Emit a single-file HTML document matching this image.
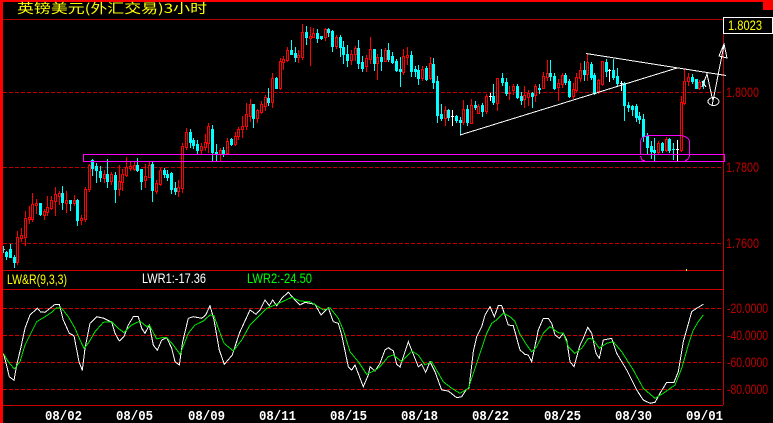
<!DOCTYPE html>
<html><head><meta charset="utf-8"><style>
html,body{margin:0;padding:0;background:#000;width:773px;height:423px;overflow:hidden}
svg{display:block}
text{white-space:pre}
</style></head><body>
<svg id="s" xmlns="http://www.w3.org/2000/svg" width="773" height="423" viewBox="0 0 773 423">
<rect width="773" height="423" fill="#000"/>
<g id="grid" shape-rendering="crispEdges">
<path d="M3 19.5H723" stroke="#b00000"/>
<path d="M3 92.5H723M3 167.5H723M3 243.5H723" stroke="#c00000" stroke-dasharray="4 2"/>
<path d="M3 308.5H723M3 335.5H723M3 362.5H723M3 389.5H723" stroke="#d00000" stroke-dasharray="4 2"/>
<path d="M3 270.5H723M3 289.5H723M3 405.5H723M723.5 19V405" stroke="#c80000"/>
</g>
<g id="candles" shape-rendering="crispEdges"></g>
<g shape-rendering="crispEdges" fill="none" stroke="#ff00ff">
<rect x="83.5" y="154.5" width="641" height="7"/>
<path d="M640.5 154V141L642 138L645 136.5L648 135.5H681L685 136.5L688 138.5L689.5 141V156L688 159L685 161"/>
<path d="M640.5 156L642 160L645 161"/>
</g>
<g shape-rendering="crispEdges" fill="none" stroke="#fff">
<path d="M460 135L677 68"/>
<path d="M586 53.5L726 75.5"/>
<path d="M702 87L707 74L712 97L713 100"/>
<path d="M702 81L706 87"/>
<ellipse cx="713.5" cy="101.5" rx="5.5" ry="4"/>
<path d="M712 106L724 45"/>
<path d="M724 44L719 56L727 58L724 44Z"/>
</g>
<g id="osc" shape-rendering="crispEdges" fill="none"></g>
<rect x="686" y="269" width="1" height="2" fill="#ff0"/>
<rect x="0" y="0" width="773" height="2" fill="#f00"/>
<rect x="0" y="0" width="3" height="423" fill="#f00"/>
<rect x="763" y="0" width="10" height="10" fill="#f00"/>
<rect x="723.5" y="17.5" width="49" height="16" fill="#000" stroke="#fff"/>
<text x="17" y="13" font-size="13" fill="#ff0" textLength="190" lengthAdjust="spacingAndGlyphs" font-family="'WenQuanYi Zen Hei','Noto Sans CJK SC',sans-serif">英镑美元(外汇交易)3小时</text>
<g font-family="'Liberation Sans',sans-serif" font-size="13.5">
<text x="728" y="30" fill="#ff0" textLength="34" lengthAdjust="spacingAndGlyphs">1.8023</text>
<g fill="#c00000">
<text x="726" y="97" textLength="33" lengthAdjust="spacingAndGlyphs">1.8000</text>
<text x="726" y="172" textLength="33" lengthAdjust="spacingAndGlyphs">1.7800</text>
<text x="726" y="248" textLength="33" lengthAdjust="spacingAndGlyphs">1.7600</text>
<text x="727" y="313" textLength="41" lengthAdjust="spacingAndGlyphs">-20.0000</text>
<text x="727" y="340" textLength="41" lengthAdjust="spacingAndGlyphs">-40.0000</text>
<text x="727" y="367" textLength="41" lengthAdjust="spacingAndGlyphs">-60.0000</text>
<text x="727" y="394" textLength="41" lengthAdjust="spacingAndGlyphs">-80.0000</text>
</g>
<text x="7" y="284" fill="#ff0" textLength="60" lengthAdjust="spacingAndGlyphs">LW&amp;R(9,3,3)</text>
<text x="142" y="283" fill="#fff" textLength="64" lengthAdjust="spacingAndGlyphs">LWR1:-17.36</text>
<text x="247" y="283" fill="#0f0" textLength="65" lengthAdjust="spacingAndGlyphs">LWR2:-24.50</text>
</g>
<g font-family="'Liberation Mono',monospace" font-size="14" font-weight="bold" fill="#fff">
<text x="45" y="420" textLength="37" lengthAdjust="spacingAndGlyphs">08/02</text>
<text x="116" y="420" textLength="37" lengthAdjust="spacingAndGlyphs">08/05</text>
<text x="188" y="420" textLength="37" lengthAdjust="spacingAndGlyphs">08/09</text>
<text x="259" y="420" textLength="37" lengthAdjust="spacingAndGlyphs">08/11</text>
<text x="330" y="420" textLength="37" lengthAdjust="spacingAndGlyphs">08/15</text>
<text x="401" y="420" textLength="37" lengthAdjust="spacingAndGlyphs">08/18</text>
<text x="472" y="420" textLength="37" lengthAdjust="spacingAndGlyphs">08/22</text>
<text x="544" y="420" textLength="37" lengthAdjust="spacingAndGlyphs">08/25</text>
<text x="615" y="420" textLength="37" lengthAdjust="spacingAndGlyphs">08/30</text>
<text x="686" y="420" textLength="37" lengthAdjust="spacingAndGlyphs">09/01</text>
</g>
</svg>
<script>
var px="c 3 246 249 249 252,c 6 251 252 256 259,c 10 244 249 257 257,c 14 255 257 262 267,r 17 231 237 262 264,r 21 228 235 238 241,r 25 211 218 237 245,r 29 206 217 219 223,r 32 193 204 219 221,r 36 199 203 205 213,c 40 203 203 214 215,r 44 209 211 215 219,r 47 196 207 212 215,r 51 196 200 208 209,r 55 187 194 201 215,r 59 191 193 196 204,c 62 186 193 202 209,r 66 191 200 203 212,c 70 200 200 203 210,r 74 195 200 203 205,c 77 199 200 220 225,r 81 215 218 220 224,r 85 187 189 219 221,r 89 164 165 189 191,c 92 159 160 168 175,c 96 163 166 170 182,c 100 166 171 177 181,r 104 170 174 178 182,c 107 159 174 181 187,r 111 172 174 181 184,c 115 172 175 189 202,r 119 165 181 189 195,r 122 169 174 182 190,r 126 157 167 175 176,r 130 162 166 168 170,r 134 162 165 169 170,c 137 158 165 170 171,c 141 169 169 181 189,r 145 164 176 180 187,r 149 162 165 177 177,c 152 162 164 190 201,r 156 180 183 191 193,r 160 168 170 184 185,c 164 168 170 174 177,c 167 170 174 177 180,c 171 172 173 189 193,c 175 182 188 191 194,r 178 180 187 191 196,r 182 143 146 188 192,r 186 128 132 147 149,c 190 129 132 142 147,c 193 138 140 145 148,c 197 140 144 150 154,r 201 143 146 150 154,r 205 134 142 147 150,r 208 123 126 143 152,c 212 125 129 152 161,c 216 144 152 154 160,r 220 148 150 154 161,c 223 147 150 153 156,r 227 138 141 153 154,c 231 138 139 144 145,r 235 132 136 144 145,r 238 127 129 136 139,r 242 116 126 129 137,r 246 103 114 126 129,r 250 99 104 116 121,c 253 104 104 118 127,r 257 109 110 118 122,r 261 101 104 112 113,r 265 95 97 106 110,c 268 88 98 102 105,r 272 73 78 102 107,c 276 77 78 88 88,r 280 58 61 88 89,r 283 56 59 62 69,r 287 47 50 60 61,c 291 40 50 54 54,c 295 47 53 57 61,r 298 50 55 57 62,r 302 24 32 57 59,c 306 26 32 37 44,r 310 27 36 38 65,r 313 28 33 37 37,c 317 29 33 38 42,c 321 36 36 38 39,r 325 28 29 37 40,c 328 28 29 32 36,c 332 30 31 46 51,r 336 35 37 46 48,c 340 35 37 47 56,c 343 41 47 54 63,c 347 45 54 60 66,r 351 50 54 60 64,r 355 46 48 54 60,c 358 40 48 63 68,c 362 56 62 68 71";
var z2="r 319 165 174 198 213,r 331 111 147 177 189,c 341 147 147 189 210,r 352 162 171 189 237,c 364 147 171 183 210,r 376 144 150 182 183,c 385 129 150 177 183,c 397 156 168 186 189,c 409 177 183 210 213,c 421 171 207 213 258,r 430 147 168 216 222,r 442 141 165 171 192,c 454 153 165 213 228,c 466 198 207 213 228,c 475 195 210 234 252,r 487 198 207 234 240,c 499 198 204 237 240,r 511 171 189 234 237,c 520 174 192 246 264,c 532 228 243 345 366,c 544 312 342 354 360,r 556 318 330 354 375,c 565 327 330 351 360,w 577 330 348 348 375,c 589 345 348 360 366,c 601 351 360 366 402,r 610 300 327 366 372,c 622 315 327 366 375,r 634 297 315 369 369,c 646 303 315 321 327,r 655 312 318 339 339,c 667 309 315 333 348,r 679 282 288 333 339,w 691 279 288 288 300,c 700 252 288 306 312,r 712 234 234 309 330";
var z12="c 5 69 84 96 105,c 17 84 96 129 135,r 26 108 126 126 147,r 38 102 108 120 132,c 50 102 108 141 144,c 62 126 138 150 162,r 71 108 135 147 171,r 83 120 129 141 165,c 95 126 129 138 171,r 104 102 108 135 153,c 116 102 114 116 129,r 128 66 78 114 114,r 140 30 69 81 90,c 149 30 69 78 90,c 161 69 78 114 117,r 173 87 99 111 150,r 185 69 75 102 111,c 194 69 75 96 102,c 206 87 93 138 141,r 218 99 117 138 144,r 229 69 81 120 123,r 239 39 60 84 93,c 251 33 60 72 90,r 262 12 36 72 90,c 274 36 42 81 87,c 283 69 75 129 132,r 295 87 90 123 129,r 307 33 33 102 105,c 319 27 36 63 78,w 328 57 60 60 93,c 340 27 60 81 87,c 352 54 78 99 108,w 364 93 99 99 120,c 373 96 99 165 210,c 385 156 165 171 183";
var px2="c 628 103 105 107 111,c 632 105 106 109 115,c 636 104 106 117 121,c 639 112 116 119 123,c 643 114 119 136 141,c 647 133 136 147 153,c 651 141 146 151 158,c 654 138 150 152 161,r 658 141 143 152 154,c 662 142 143 150 152,r 666 137 139 150 151,c 669 138 139 150 152,c 673 143 149 149 159,w 677 140 149 149 160,r 681 96 102 150 151,r 684 69 81 103 104,r 688 73 77 81 85,c 692 74 77 81 83,c 696 79 79 88 88,r 699 80 82 88 89,c 703 80 81 85 88";
var col={r:"#ff0000",c:"#00ffff",w:"#ffffff"},out="";
function add(str,dx,dy,k){str.split(",").forEach(function(l){var p=l.trim().split(" ");var t=p[0];
var x=Math.round(dx+p[1]*k),h=Math.round(dy+p[2]*k),a=Math.round(dy+p[3]*k),b=Math.round(dy+p[4]*k),o=Math.round(dy+p[5]*k);
var C=col[t];
out+='<path d="M'+(x+.5)+' '+h+'V'+(o+1)+'" stroke="'+C+'"/>';
if(t=="r"){out+='<rect x="'+(x-.5)+'" y="'+(a+.5)+'" width="2" height="'+Math.max(b-a,1)+'" fill="#000" stroke="'+C+'"/>';}
else if(a==b){out+='<rect x="'+(x-1)+'" y="'+a+'" width="3" height="1" fill="'+C+'"/>';}
else{out+='<rect x="'+(x-1)+'" y="'+a+'" width="3" height="'+(b-a+1)+'" fill="'+C+'"/>';}
});}
add(px,0,0,1);add(z2,260,0,1/3);add(z12,500,50,1/3);add(px2,0,0,1);
document.getElementById("candles").innerHTML=out;
function pl(str,dx,dy){return str.trim().split(/\s+/).map(function(s){var p=s.split(",");return (dx+p[0]/3).toFixed(1)+","+(dy+p[1]/3).toFixed(1);}).join(" ");}
var w6="10,265 17,290 28,335 42,346 50,300 62,250 75,190 90,150 112,130 122,141 135,142 150,130 165,118 178,118 190,165 208,205 222,212 237,290 247,316 255,250 270,175 290,155 312,160 335,172 345,205 358,228 372,215 385,180 400,155 415,155 425,190 435,205 448,180 460,240 472,256 485,225 500,218 515,250 525,290 538,300 548,230 565,160 580,155 605,160 617,150 630,122 642,165 658,255 673,298 697,270 718,205 750,135 768,148 780,135";
var g6="10,265 25,290 43,312 60,290 75,240 90,210 110,170 135,155 155,142 170,128 185,130 205,155 225,190 240,225 252,250 265,235 285,200 310,172 335,170 355,190 372,203 395,180 420,168 440,185 448,180 470,222 485,218 500,218 520,240 540,268 565,205 585,180 610,168 630,150 642,152 655,190 672,235 700,258 725,225 750,180 780,150";
var w7="15,105 28,122 38,105 50,122 65,100 85,82 105,105 120,120 135,112 165,118 183,150 205,128 220,170 235,175 245,210 265,305 275,315 285,300 310,365 325,330 330,305 345,318 360,295 375,255 385,248 400,258 410,298 420,306 445,230 475,305 485,298 497,322 510,290 525,320 545,375 565,378 590,398 605,395 620,372 627,370 640,260 650,215 665,185 675,150 690,125 703,155 715,122 725,122 745,180 760,182 780,255";
var g7="20,130 50,118 95,97 120,108 150,110 175,125 190,135 210,128 235,160 250,195 270,260 295,290 320,328 345,316 360,305 385,275 400,270 425,290 455,258 475,270 495,300 515,290 550,350 575,370 600,385 625,370 645,310 680,205 695,175 710,165 730,145 750,155 765,170 780,208";
var w8="15,268 25,270 35,290 55,195 70,160 85,160 95,175 105,210 118,220 130,205 140,225 150,290 162,305 180,240 190,220 203,187 215,205 228,265 238,280 250,225 275,220 290,265 320,315 350,375 370,405 390,415 405,412 420,385 440,352 462,352 475,320 490,230 515,140 530,130 550,118";
var g8="20,240 35,260 50,245 70,205 90,185 115,203 130,205 145,245 165,265 185,250 205,220 218,222 238,250 260,235 280,230 305,260 340,315 370,370 405,400 430,385 465,360 485,310 505,240 520,195 535,170 550,150";
document.getElementById("osc").innerHTML=
'<polyline stroke="#fff" points="'+pl(w6,0,265)+' '+pl(w7,260,265)+' '+pl(w8,520,265)+'"/>'+
'<polyline stroke="#00e800" points="'+pl(g6,0,265)+' '+pl(g7,260,265)+' '+pl(g8,520,265)+'"/>';
</script>
</body></html>
